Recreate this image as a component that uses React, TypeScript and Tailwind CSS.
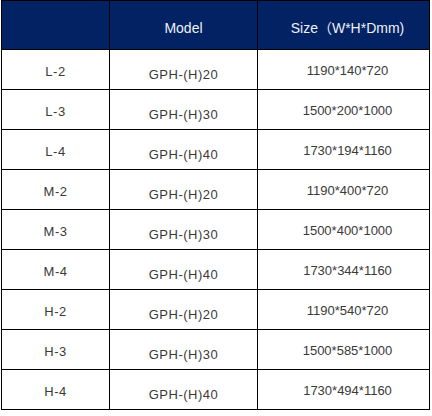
import React from 'react';

const rows = [
  ['L-2', 'GPH-(H)20', '1190*140*720'],
  ['L-3', 'GPH-(H)30', '1500*200*1000'],
  ['L-4', 'GPH-(H)40', '1730*194*1160'],
  ['M-2', 'GPH-(H)20', '1190*400*720'],
  ['M-3', 'GPH-(H)30', '1500*400*1000'],
  ['M-4', 'GPH-(H)40', '1730*344*1160'],
  ['H-2', 'GPH-(H)20', '1190*540*720'],
  ['H-3', 'GPH-(H)30', '1500*585*1000'],
  ['H-4', 'GPH-(H)40', '1730*494*1160'],
];

export default function App() {
  return (
    <div className="w-[432px] h-[416px] bg-white" style={{ fontFamily: '"Liberation Sans", "Noto Sans CJK SC", sans-serif' }}>
      <div className="ml-[1px] w-[429px] border-l border-t border-black grid grid-cols-[108px_148px_172px]">
        {/* header */}
        <div className="h-[49px] bg-[#022263] border-r border-b border-black" />
        <div className="h-[49px] bg-[#022263] border-r border-b border-black flex items-center justify-center pt-[6px] text-[14px] text-[#eef0f5]">
          Model
        </div>
        <div className="h-[49px] bg-[#022263] border-r border-b border-black flex items-center justify-center pt-[6px] pl-[8px] text-[14px] text-[#eef0f5]">
          Size（W*H*Dmm)
        </div>

        {rows.map((r) => (
          <React.Fragment key={r[0]}>
            <div className="h-[40px] border-r border-b border-black flex items-center justify-center pt-[5px] tracking-[0.5px] text-[13px] text-[#3a3a3a]">
              {r[0]}
            </div>
            <div className="h-[40px] border-r border-b border-black flex items-center justify-center pt-[11px] tracking-[0.5px] text-[13px] text-[#3a3a3a]">
              {r[1]}
            </div>
            <div className="h-[40px] border-r border-b border-black flex items-center justify-center pt-[3px] pl-[8px] text-[13px] text-[#3a3a3a]">
              {r[2]}
            </div>
          </React.Fragment>
        ))}
      </div>
    </div>
  );
}
